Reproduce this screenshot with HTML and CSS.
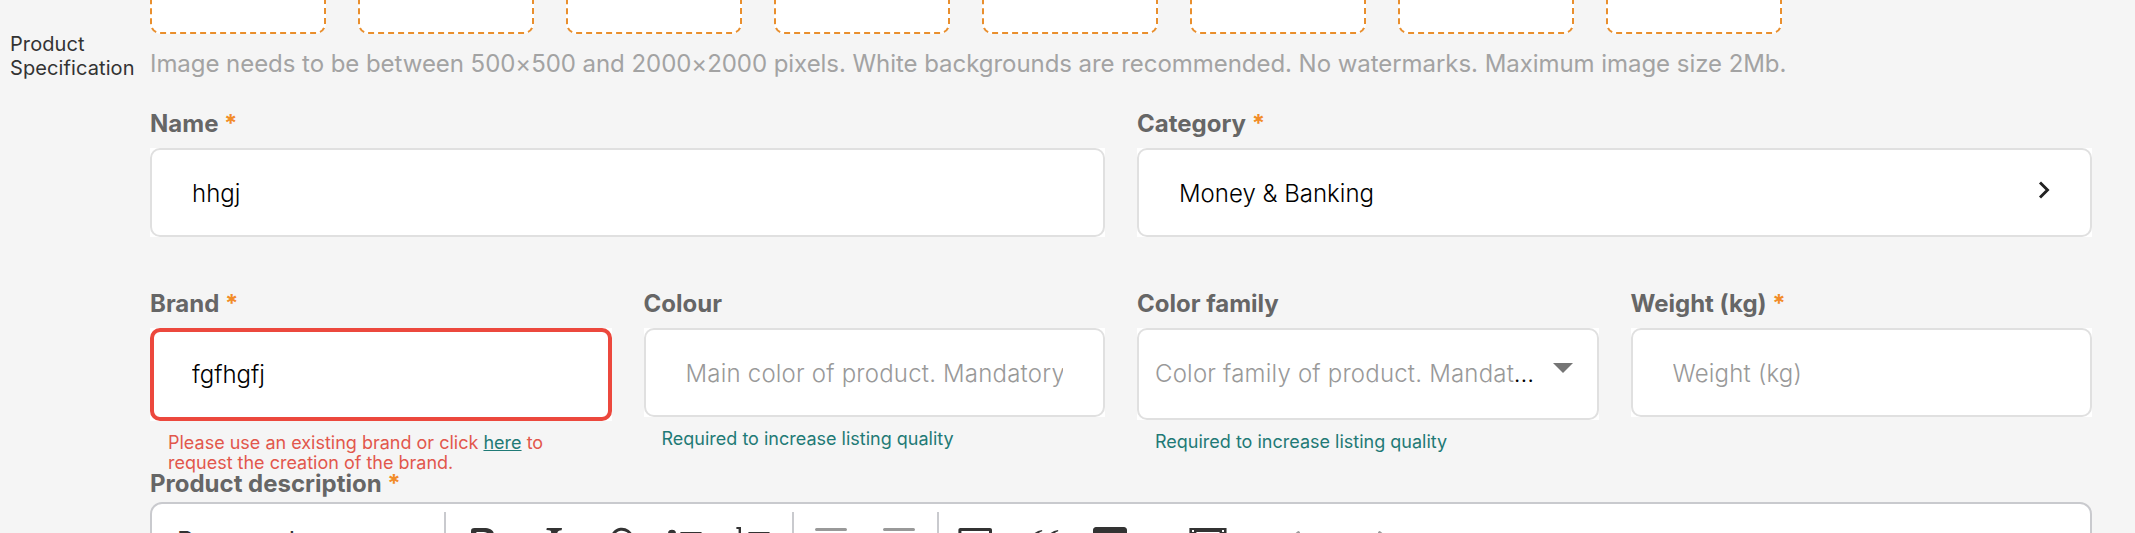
FILE: index.html
```html
<!DOCTYPE html>
<html lang="en">
<head>
    <meta charset="UTF-8">
    <meta name="viewport" content="width=device-width, initial-scale=1.0">
    <title>Product Specification</title>
    <link rel="stylesheet" href="styles.css">
</head>
<body>
    <div class="page">
        <aside class="side-label">Product Specification</aside>
        <main class="form">
            <div class="uploads">
                <div class="upload"></div>
                <div class="upload"></div>
                <div class="upload"></div>
                <div class="upload"></div>
                <div class="upload"></div>
                <div class="upload"></div>
                <div class="upload"></div>
                <div class="upload"></div>
            </div>
            <p class="upload-hint">Image needs to be between 500×500 and 2000×2000 pixels. White backgrounds are recommended. No watermarks. Maximum image size 2Mb.</p>

            <div class="row row-main">
                <div class="field">
                    <label class="label" for="name">Name <span class="required">*</span></label>
                    <div class="control"><input class="input" id="name" type="text" value="hhgj"></div>
                </div>
                <div class="field">
                    <label class="label">Category <span class="required">*</span></label>
                    <div class="control">
                        <div class="input picker">
                            <span>Money &amp; Banking</span>
                            <svg class="chevron" width="12" height="20" viewBox="0 0 12 20"><path d="M2 2.500L9.500 10L2 17.500" fill="none" stroke="#222" stroke-width="2.900"/></svg>
                        </div>
                    </div>
                </div>
            </div>

            <div class="row row-details">
                <div class="field">
                    <label class="label" for="brand">Brand <span class="required">*</span></label>
                    <div class="control"><input class="input invalid" id="brand" type="text" value="fgfhgfj"></div>
                    <p class="help error">Please use an existing brand or click <a href="#">here</a> to request the creation of the brand.</p>
                </div>
                <div class="field">
                    <label class="label" for="colour">Colour</label>
                    <div class="control"><input class="input" id="colour" type="text" placeholder="Main color of product. Mandatory"></div>
                    <p class="help">Required to increase listing quality</p>
                </div>
                <div class="field">
                    <label class="label">Color family</label>
                    <div class="control">
                        <div class="input select">
                            <div class="select-text"><span>Color family of product. Mandatory</span></div>
                            <svg class="caret" width="20" height="10" viewBox="0 0 20 10"><path d="M0 0h20L10 10z" fill="#757575"/></svg>
                        </div>
                    </div>
                    <p class="help">Required to increase listing quality</p>
                </div>
                <div class="field">
                    <label class="label" for="weight">Weight (kg) <span class="required">*</span></label>
                    <div class="control"><input class="input" id="weight" type="text" placeholder="Weight (kg)"></div>
                </div>
            </div>

            <div class="description">
                <label class="label">Product description <span class="required">*</span></label>
                <div class="toolbar">
                    <div class="heading">Paragraph</div>
                    <span class="separator"></span>
                    <div class="group">
                        <svg viewBox="0 0 20 20"><path d="M10.2 17H5.8c-1.300 0-1.800-.5-1.800-1.700V4.700C4 3.500 4.500 3 5.800 3h4.700c3.200 0 5 1.200 5 3.600 0 1.500-.9 2.600-2.400 3.100 2 .4 3 1.600 3 3.400C16.100 15.700 14 17 10.200 17zM6.700 5v3.900H9.500c2 0 3.100-.5 3.100-2S11.600 5 9.600 5zM6.700 11v4h3.100c2.100 0 3.300-.6 3.300-2s-1.100-2-3.300-2z"/></svg>
                        <svg viewBox="0 0 20 20"><path d="M7.900 3h7.600l-.2 1.100c-1.500.1-1.900.4-2.200 1.500l-2 8.500c-.3 1.300.1 1.700 1.700 1.900l-.2 1H5.500l.2-1c1.500-.1 2-.4 2.300-1.600l2-8.800c.3-1.200-.1-1.500-2.300-1.600z"/></svg>
                        <svg viewBox="0 0 20 20"><path d="M8.300 12.500A5 5 0 1 1 15.500 11.500M11.700 9.500A4.700 4.700 0 1 1 4.800 8.800" fill="none" stroke="#333" stroke-width="1.500"/></svg>
                        <svg viewBox="0 0 20 20"><path d="M7 5.750c0 .414.336.75.75.75h9.500a.75.75 0 1 0 0-1.500h-9.500a.75.75 0 0 0-.75.75zM7 14.250c0 .414.336.75.75.75h9.500a.75.75 0 1 0 0-1.500h-9.500a.75.75 0 0 0-.75.75zM1 5.870a2 2 0 1 1 4 0 2 2 0 0 1-4 0zM1 14.300a2 2 0 1 1 4 0 2 2 0 0 1-4 0z"/></svg>
                        <svg viewBox="0 0 20 20"><path d="M7 5.750c0 .414.336.75.75.75h9.500a.75.75 0 1 0 0-1.500h-9.500a.75.75 0 0 0-.75.75zM7 14.250c0 .414.336.75.75.75h9.500a.75.75 0 1 0 0-1.500h-9.500a.75.75 0 0 0-.75.75zM1.200 2.500H3.500v5.500H2.300V3.500H1.200zM1.500 12.500c1-1.200 3.500-.9 3 1.100L3 16h2v1H1.300v-.8l2.100-2.700c0-.8-.9-.8-1.300-.2z"/></svg>
                    </div>
                    <span class="separator"></span>
                    <div class="group disabled">
                        <svg viewBox="0 0 20 20"><path d="M2 3.750c0 .414.336.75.75.75h14.500a.75.75 0 1 0 0-1.500H2.750a.75.75 0 0 0-.75.75zM7 8h11v1.500H7zM7 12h8v1.500H7zM2 16h16v1.500H2zM5 7.500v5L1.500 10z"/></svg>
                        <svg viewBox="0 0 20 20"><path d="M2 3.750c0 .414.336.75.75.75h14.500a.75.75 0 1 0 0-1.500H2.750a.75.75 0 0 0-.75.75zM7 8h11v1.500H7zM7 12h8v1.500H7zM2 16h16v1.500H2zM1.500 7.500v5L5 10z"/></svg>
                    </div>
                    <span class="separator"></span>
                    <div class="group">
                        <svg viewBox="0 0 20 20"><path d="M2.200 3h14.800c.6 0 1 .4 1 1v12c0 .6-.4 1-1 1H2.200c-.6 0-1-.4-1-1V4c0-.6.4-1 1-1zm.5 1.500v11h13.800v-11zM4 14l3.500-4 2.500 2.500 2-2 3 3.500z" fill-rule="evenodd"/></svg>
                        <svg viewBox="0 0 20 20"><path d="M3 10.423a6.500 6.500 0 0 1 6.056-6.408l.038.67C6.448 5.423 5.354 7.663 5.220 10H9c.552 0 .5.432.5.986v4.511c0 .554-.448.503-1 .503h-5c-.552 0-.5-.449-.5-1.003zM11 10.423a6.500 6.500 0 0 1 6.056-6.408l.038.67c-2.646.739-3.740 2.979-3.873 5.315H17c.552 0 .5.432.5.986v4.511c0 .554-.448.503-1 .503h-5c-.552 0-.5-.449-.5-1.003z"/></svg>
                        <svg class="with-arrow" viewBox="0 0 20 20"><path d="M2.500 2.500h14c.8 0 1.500.7 1.500 1.500v12c0 .8-.7 1.500-1.500 1.500h-14C1.700 17.500 1 16.800 1 16V4c0-.8.7-1.500 1.500-1.500zM3 7v2.500h3.500V7zM8 7v2.500h3.500V7zM13 7v2.500h3.500V7zM3 11v4h3.500v-4zM8 11v4h3.500v-4zM13 11v4h3.500v-4z" fill-rule="evenodd"/></svg>
                        <svg viewBox="0 0 20 20"><path d="M.7 3h18.570v14H.7zM4.200 5v10h11.570V5zM2 4v1h1V4zM2 6v1h1V6zM2 8v1h1V8zM17 4v1h1V4zM17 6v1h1V6zM17 8v1h1V8z" fill-rule="evenodd"/></svg>
                    </div>
                    <div class="group history disabled">
                        <svg viewBox="0 0 20 20"><path d="m5.042 9.367 2.189 1.837a.75.75 0 0 1-.965 1.149l-3.788-3.180a.75.75 0 0 1-.04-1.229L6.230 4.762a.75.75 0 1 1 .964 1.150L4.863 7.866h8.917A4.200 4.200 0 0 1 14 16h-3v-1.500h3a2.600 2.600 0 0 0 0-5.133z"/></svg>
                        <svg viewBox="0 0 20 20"><path d="m14.958 9.367-2.189 1.837a.75.75 0 0 0 .965 1.149l3.788-3.180a.75.75 0 0 0 .04-1.229L13.770 4.762a.75.75 0 1 0-.964 1.150l2.331 1.954H6.220A4.200 4.200 0 0 0 6 16h3v-1.500H6a2.600 2.600 0 0 1 0-5.133z"/></svg>
                    </div>
                </div>
            </div>
        </main>
    </div>
</body>
</html>
```

FILE: styles.css
```css
* {
    box-sizing: border-box;
}

body {
    margin: 0;
    height: 533px;
    overflow: hidden;
    background-color: #f5f5f5;
    font-family: Inter, sans-serif;
    font-size: 24px;
    color: #000;
}

.page {
    display: flex;
    height: 533px;
    overflow: hidden;
}

.side-label {
    width: 150px;
    padding: 32px 0 0 10px;
    font-size: 20px;
    line-height: 24px;
    letter-spacing: 0.1px;
    color: #333;
}

.form {
    width: 1942px;
}

.uploads {
    display: flex;
    gap: 32px;
    height: 34px;
    align-items: flex-end;
}

.upload {
    width: 176px;
    height: 176px;
    flex: none;
    background-color: #fff;
    border: 2px dashed #e98f2e;
    border-radius: 10px;
}

.upload-hint {
    margin: 15px 0 0;
    line-height: 30px;
    letter-spacing: -0.05px;
    color: #a3a3a3;
}

.row {
    display: grid;
    column-gap: 32px;
    align-items: start;
}

.row-main {
    grid-template-columns: repeat(2, 1fr);
    height: 180px;
    margin-top: 29px;
}

.row-details {
    grid-template-columns: repeat(4, 1fr);
    height: 180px;
}

.field {
    min-width: 0;
}

.label {
    display: block;
    height: 40px;
    padding-top: 1px;
    line-height: 30px;
    font-weight: 700;
    color: #666;
}

.required {
    color: #f28c28;
}

/* square white backing behind the rounded inputs */
.control {
    background-color: #fff;
}

.input {
    display: block;
    width: 100%;
    height: 89px;
    padding: 2px 40px 0;
    background-color: #fff;
    border: 2px solid #e0e0e0;
    border-radius: 10px;
    font-family: inherit;
    font-size: 24px;
    font-weight: 300;
    color: #000;
}

.input::placeholder {
    color: #999;
    opacity: 1;
    letter-spacing: 0.2px;
}

.invalid {
    height: 93px;
    padding: 0 38px;
    border: 4px solid #ec483d;
}

.picker {
    display: flex;
    align-items: center;
    justify-content: space-between;
    padding-right: 40px;
}

.chevron {
    margin-bottom: 8px;
}

.select {
    display: flex;
    align-items: center;
    justify-content: space-between;
    height: 92px;
    padding: 0 24px 0 16px;
}

.select-text {
    width: 385px;
    line-height: 32px;
    letter-spacing: 0.2px;
    white-space: nowrap;
    overflow: hidden;
    text-overflow: ellipsis;
}

.select-text span {
    color: #999;
}

.caret {
    margin-bottom: 12px;
}

.help {
    margin: 12px 18px 0;
    font-size: 18px;
    line-height: 20px;
    color: #1f7a76;
}

.help.error {
    color: #e2574c;
}

.help a {
    color: #1f7a76;
}

.description .label {
    height: 34px;
}

.toolbar {
    display: flex;
    height: 80px;
    padding: 8px 0 0 25px;
    background-color: #fff;
    border: 2px solid #c9cace;
    border-radius: 12px;
}

.heading {
    width: 267px;
    padding-top: 11px;
    font-size: 26px;
    line-height: 36px;
    color: #333;
}

.separator {
    width: 2px;
    height: 60px;
    background-color: #c9cace;
}

.group {
    display: flex;
    gap: 27.75px;
    padding: 10px 18px 0 17px;
}

.group svg {
    width: 40px;
    height: 40px;
    flex: none;
    fill: #333;
}

.group .with-arrow {
    margin-right: 29px;
}

.group.disabled svg {
    fill: #999;
}

.history {
    padding-left: 39px;
}
```
